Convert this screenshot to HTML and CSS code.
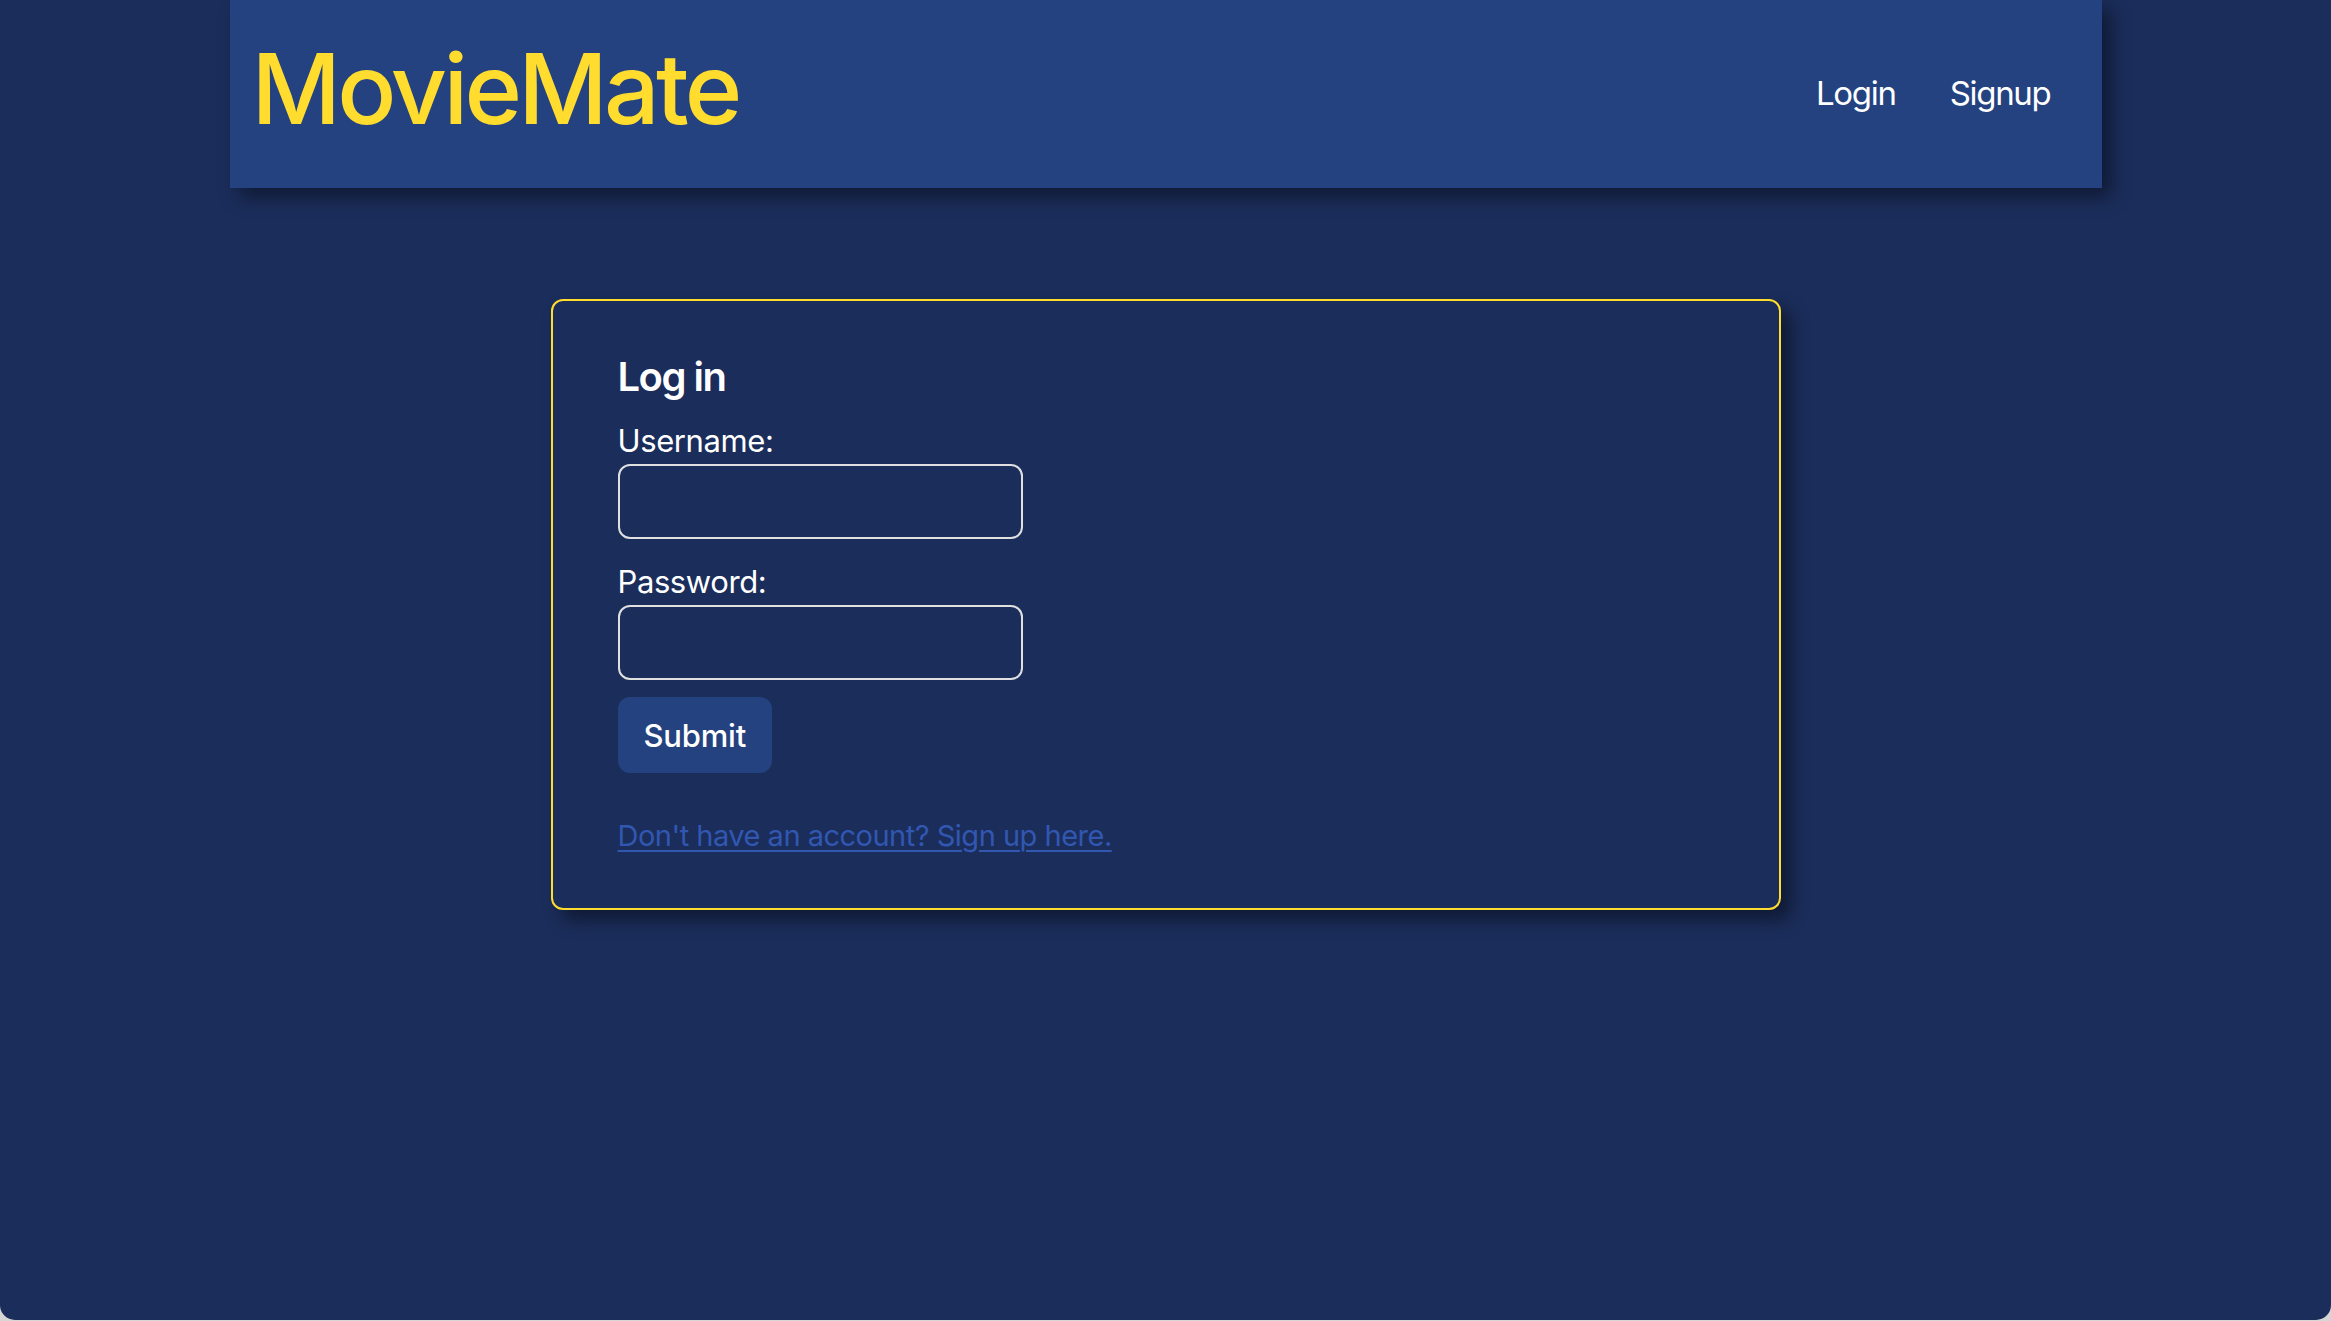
FILE: index.html
```html
<!DOCTYPE html>
<html lang="en">
<head>
<meta charset="utf-8">
<title>MovieMate</title>
<link rel="stylesheet" href="styles.css">
</head>
<body>
<div class="window">
  <header class="topbar">
    <div class="logo">MovieMate</div>
    <nav class="nav">
      <a class="nav-link" href="#">Login</a>
      <a class="nav-link" href="#">Signup</a>
    </nav>
  </header>
  <main class="card">
    <h2 class="card-title">Log in</h2>
    <form class="form">
      <label class="label" for="u">Username:</label>
      <input class="field" id="u" type="text">
      <label class="label label-second" for="p">Password:</label>
      <input class="field" id="p" type="password">
      <button class="submit" type="button">Submit</button>
    </form>
    <a class="signup-link" href="#">Don't have an account? Sign up here.</a>
  </main>
</div>
</body>
</html>
```

FILE: styles.css
```css
html {
  background: #d6d6d6;
}
body {
  margin: 0;
  font-family: Inter, "Noto Sans", "Liberation Sans", sans-serif;
  color: #ffffff;
}
.window {
  box-sizing: border-box;
  height: 1320px;
  background: #1b2d5b;
  border-bottom-left-radius: 15px;
  border-bottom-right-radius: 15px;
  overflow: hidden;
  display: flex;
  flex-direction: column;
  align-items: center;
}
.topbar {
  box-sizing: border-box;
  width: 1872px;
  height: 188px;
  flex: none;
  background: #24427f;
  box-shadow: 9px 9px 18px rgba(0, 0, 0, 0.45);
  display: flex;
  align-items: center;
  justify-content: space-between;
  padding: 0 51px 0 22px;
}
.logo {
  font-size: 98px;
  line-height: 1.2;
  font-weight: 500;
  color: #ffdc2e;
  letter-spacing: -3.7px;
  margin-bottom: 11px;
}
.nav {
  display: flex;
  gap: 54px;
}
.nav-link {
  color: #ffffff;
  text-decoration: none;
  font-size: 33px;
  line-height: 1.2;
  letter-spacing: -1.3px;
}
.card {
  box-sizing: border-box;
  width: 1230px;
  margin-top: 111px;
  border: 2px solid #ffdc2e;
  border-radius: 12px;
  background: #1b2d5b;
  box-shadow: 10px 10px 18px rgba(0, 0, 0, 0.45);
  padding: 52px 66px 55px 65px;
  display: flex;
  flex-direction: column;
  align-items: flex-start;
}
.card-title {
  margin: 0 0 21px;
  font-size: 40px;
  line-height: 48px;
  font-weight: 600;
  letter-spacing: -1.5px;
}
.form {
  display: flex;
  flex-direction: column;
  align-items: flex-start;
}
.label {
  font-size: 31px;
  line-height: 37px;
  margin-bottom: 5px;
  letter-spacing: -0.4px;
}
.label-second {
  margin-top: 24px;
}
.field {
  box-sizing: border-box;
  width: 405px;
  height: 75px;
  border: 2px solid #e0e0e0;
  border-radius: 12px;
  background: transparent;
  color: #fff;
  font: inherit;
  padding: 0 12px;
}
.submit {
  margin-top: 17px;
  height: 76px;
  padding: 0 26px;
  border: none;
  border-radius: 12px;
  background: #24427f;
  color: #ffffff;
  font-family: inherit;
  font-size: 31px;
  font-weight: 500;
  line-height: 1;
  letter-spacing: -0.2px;
}
.signup-link {
  margin-top: 45px;
  font-size: 29px;
  line-height: 35px;
  color: #3157b1;
  text-decoration: underline;
  text-underline-offset: 4px;
  text-decoration-thickness: 2px;
  letter-spacing: -0.5px;
}
```
